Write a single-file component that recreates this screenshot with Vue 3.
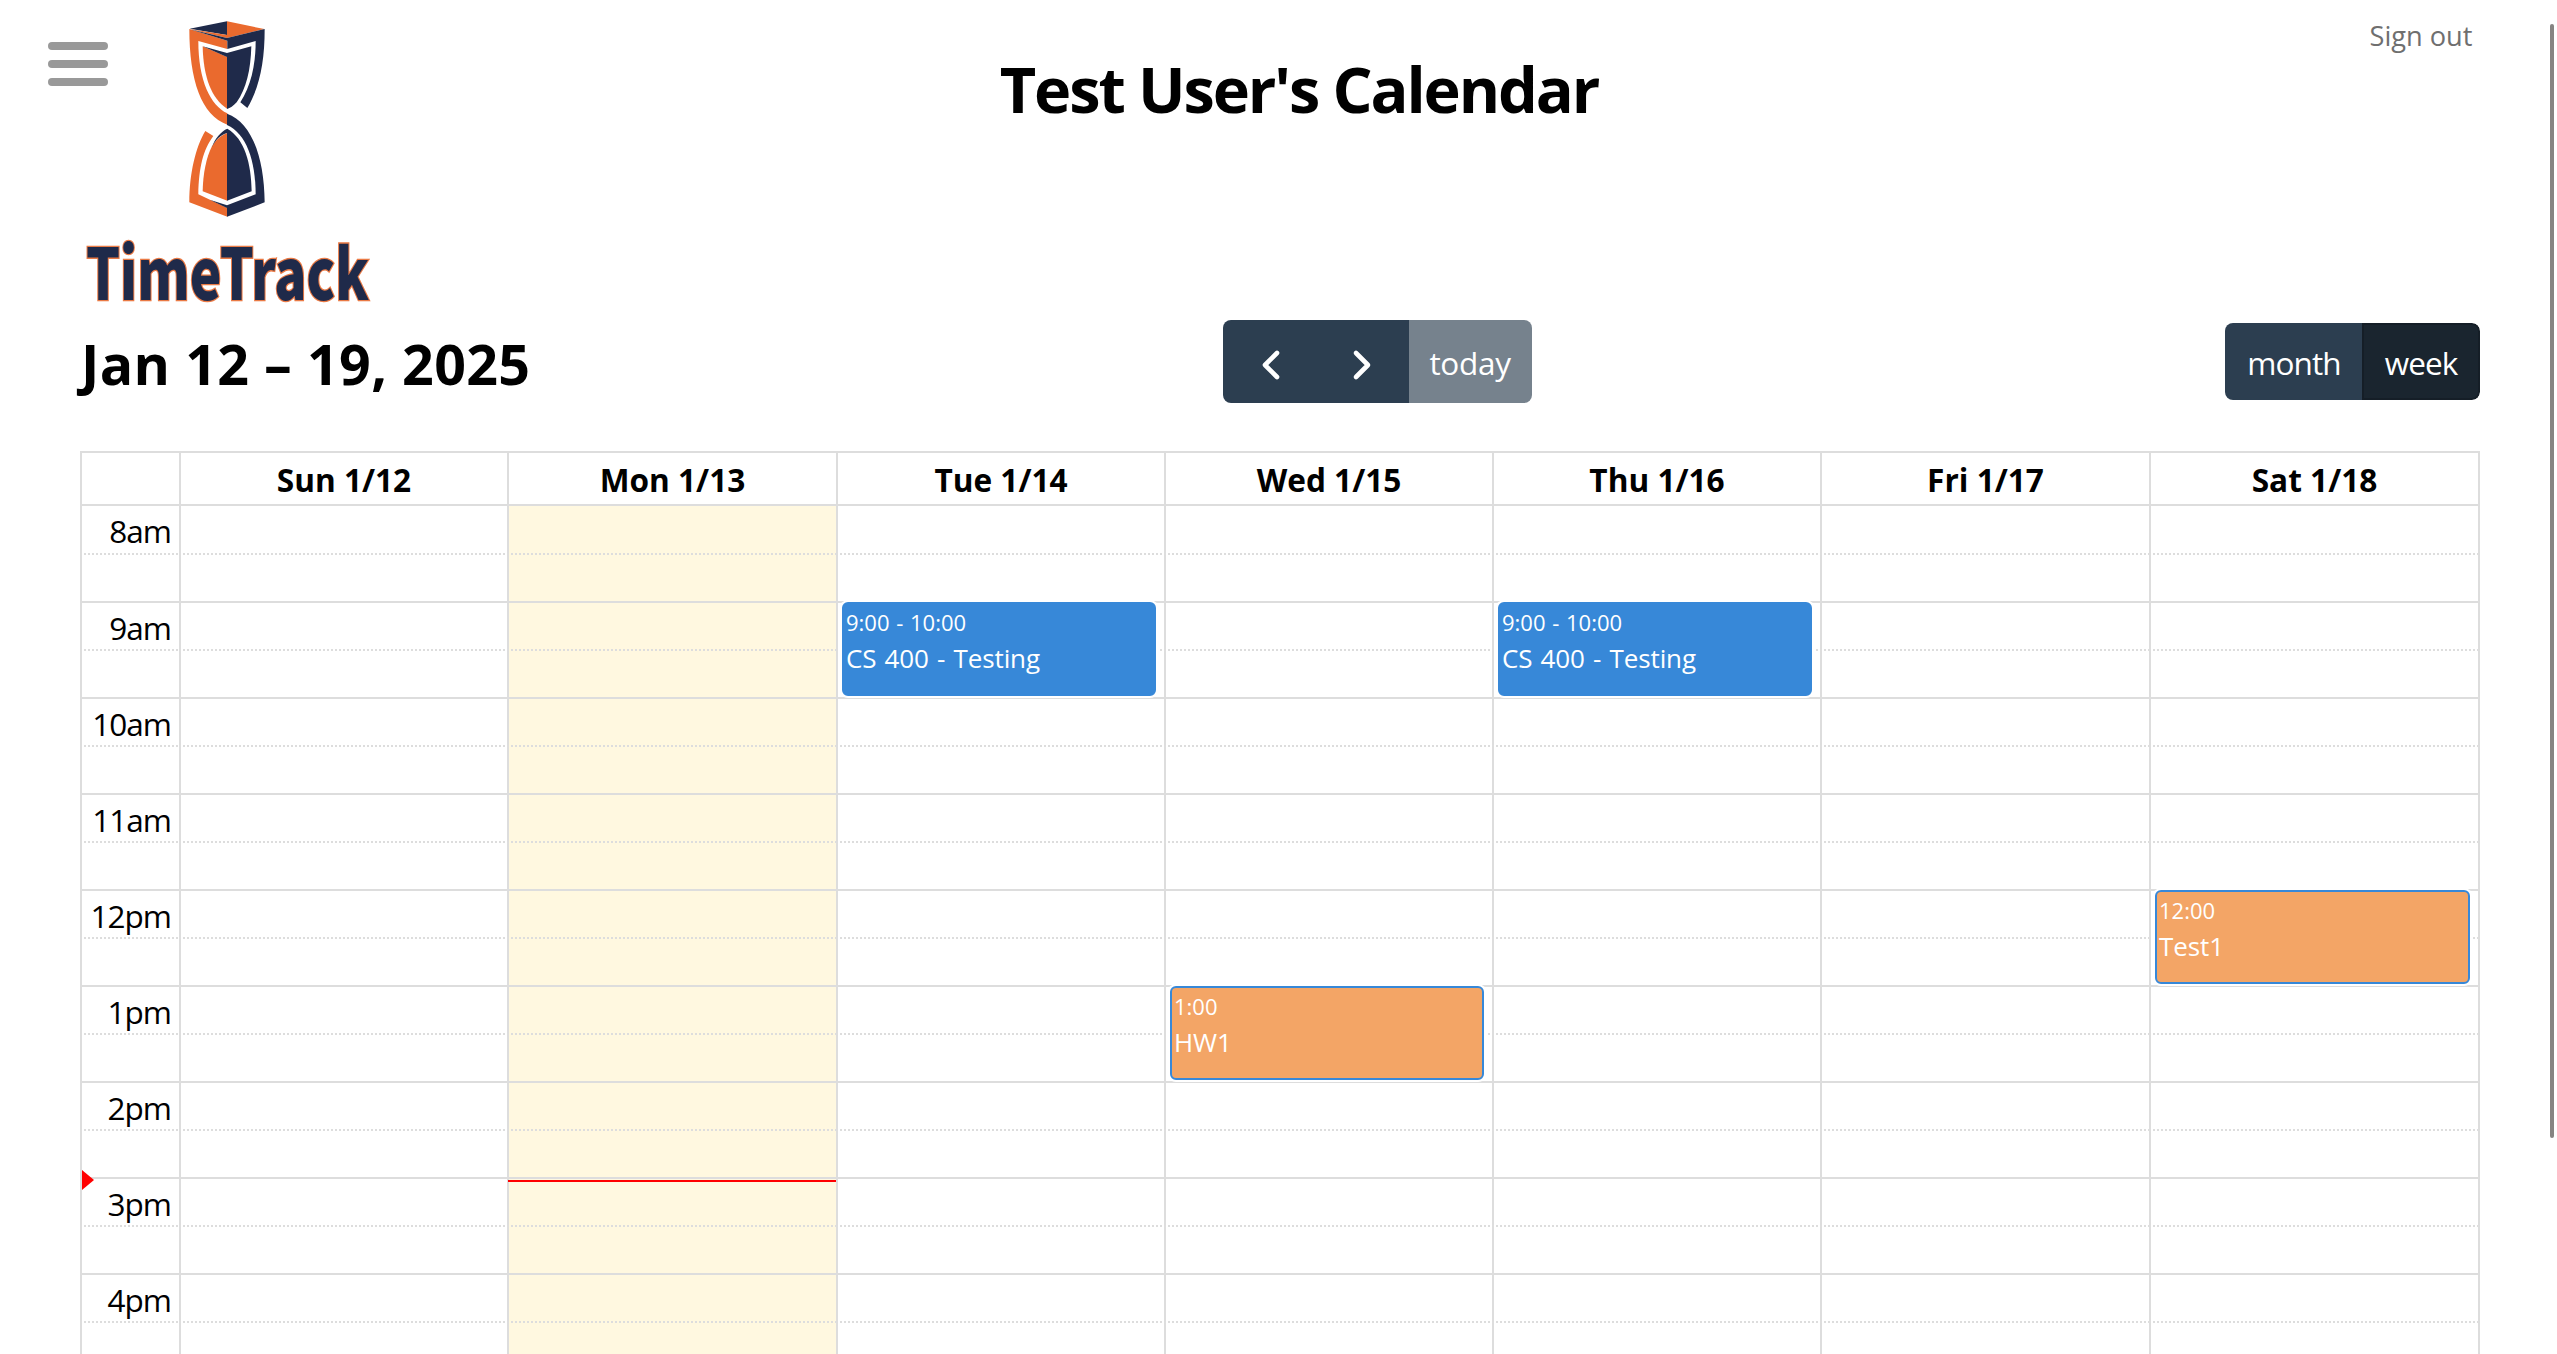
<script setup>
const days = [
  { label: 'Sun 1/12', events: [] },
  { label: 'Mon 1/13', today: true, events: [] },
  { label: 'Tue 1/14', events: [{ time: '9:00 - 10:00', title: 'CS 400 - Testing', hour: 1 }] },
  { label: 'Wed 1/15', events: [{ time: '1:00', title: 'HW1', hour: 5, task: true }] },
  { label: 'Thu 1/16', events: [{ time: '9:00 - 10:00', title: 'CS 400 - Testing', hour: 1 }] },
  { label: 'Fri 1/17', events: [] },
  { label: 'Sat 1/18', events: [{ time: '12:00', title: 'Test1', hour: 4, task: true }] },
]
const hours = ['8am', '9am', '10am', '11am', '12pm', '1pm', '2pm', '3pm', '4pm']
</script>

<template>
  <div class="page">
    <header class="top">
      <div class="brand-side">
        <button class="burger" aria-label="Menu"><i></i><i></i><i></i></button>
        <div class="brand">
          <svg class="mark" viewBox="568 62 228 588" width="76" height="196">
            <path fill="#1f2a4a" d="M570 85 682 63V104Z" />
            <path fill="#ea6a2e" d="M682 63 794 86 682 113 570 86 682 104Z" />
            <path fill="#ea6a2e" d="M569 86 683 121V146L596 122C596 240 632 315 683 339V373C605 345 569 240 569 86Z" />
            <path fill="#1f2a4a" d="M571 87 682 113 795 86C795 185 780 260 743 323L722 306C752 258 768 200 768 122L683 146V121Z" />
            <path fill="#ea6a2e" d="M609 138 683 170V326C635 295 611 230 609 138Z" />
            <path fill="#1f2a4a" d="M609 138 682 158 755 138C753 210 740 265 711 306 700 318 692 323 682 326V170Z" />
            <path fill="#ea6a2e" d="M617 392 641 407C610 450 598 500 596 582L683 623V649L569 606C569 520 588 440 617 392Z" />
            <path fill="#1f2a4a" d="M682 340C755 365 794 470 795 606L682 649V623L630 598 682 615 768 582C768 480 740 400 682 374Z" />
            <path fill="#ea6a2e" d="M609 573C610 520 620 470 637 438 650 415 668 403 683 398V601Z" />
            <path fill="#1f2a4a" d="M637 440C645 415 665 392 683 385 735 415 755 490 756 573L682 601V398C665 403 650 415 637 440Z" />
          </svg>
          <svg class="wordmark" viewBox="0 0 290 70" width="290" height="70">
            <text x="3" y="59" textLength="283" lengthAdjust="spacingAndGlyphs">TimeTrack</text>
          </svg>
        </div>
      </div>
      <h1>Test User's Calendar</h1>
      <a class="signout">Sign out</a>
    </header>

    <div class="toolbar">
      <h2>Jan 12 – 19, 2025</h2>
      <div class="group nav">
        <button class="arrow prev" aria-label="Previous"><svg width="22" height="32" viewBox="0 0 22 32"><path d="M17 4 5 16 17 28" /></svg></button>
        <button class="arrow next" aria-label="Next"><svg width="22" height="32" viewBox="0 0 22 32"><path d="M5 4 17 16 5 28" /></svg></button>
        <button class="today-btn">today</button>
      </div>
      <div class="group views">
        <button class="month">month</button>
        <button class="week">week</button>
      </div>
    </div>

    <main class="calendar">
      <div class="axis">
        <div class="head"></div>
        <div v-for="h in hours" :key="h" class="hour">
          <div class="slot">{{ h }}</div>
          <div class="slot minor"></div>
        </div>
        <div class="now-arrow"></div>
      </div>
      <div v-for="d in days" :key="d.label" class="day" :class="{ today: d.today }">
        <div class="head">{{ d.label }}</div>
        <div v-for="h in hours" :key="h" class="hour">
          <div class="slot"></div>
          <div class="slot minor"></div>
        </div>
        <div v-if="d.today" class="now-line"></div>
        <div v-for="e in d.events" :key="e.title" class="event" :class="{ task: e.task }" :style="{ top: 53 + e.hour * 96 + 'px' }">
          <div class="time">{{ e.time }}</div>
          <div class="title">{{ e.title }}</div>
        </div>
      </div>
    </main>
    <div class="scroll-thumb"></div>
  </div>
</template>

<style>
body { margin: 0; background: #fff; overflow: hidden; }
</style>

<style scoped>
.page { position: relative; width: 2557px; height: 1354px; overflow: hidden; font-family: "Open Sans", "Noto Sans", sans-serif; color: #000; background: #fff; }
h1, h2 { margin: 0; font-weight: 700; white-space: nowrap; }
button { border: 0; padding: 0; margin: 0; background: none; color: inherit; font: inherit; letter-spacing: inherit; }
svg { display: block; }

.top { display: grid; grid-template-columns: 400px 1fr 400px; height: 320px; }
.brand-side { display: flex; }
.burger { display: flex; flex-direction: column; gap: 10px; width: 60px; height: 44px; margin: 42px -25px 0 48px; }
.burger i { height: 8px; border-radius: 4px; background: #999; }
.brand { display: flex; flex-direction: column; align-items: center; width: 290px; padding-top: 20.5px; }
.mark { margin-left: -2px; }
.wordmark { margin-top: 24px; overflow: visible; }
.wordmark text { font: 900 71px "Noto Sans CJK JP", sans-serif; fill: #1f2a4a; stroke: #ea7a45; stroke-width: 2.6px; paint-order: stroke; }
h1 { padding: 49px 0 0 41px; text-align: center; font-size: 63px; line-height: 80px; letter-spacing: -2.1px; }
.signout { padding: 17px 84.5px 0 0; text-align: right; font-size: 27.2px; line-height: 38px; color: #6f6f6f; }

.toolbar { display: flex; justify-content: space-between; align-items: center; height: 83px; margin: 0 77px 0 80px; }
h2 { width: 448px; padding: 5px 0 0 1px; font-size: 55.5px; line-height: 76px; letter-spacing: 0.35px; }
.group { display: flex; font-size: 31.5px; line-height: 42px; color: #fff; border-radius: 8px; overflow: hidden; }
.group button { display: flex; align-items: center; justify-content: center; box-sizing: border-box; background: #2c3e50; padding-top: 2px; }
.nav { height: 83px; }
.arrow { width: 93px; }
.group .arrow { padding-top: 7px; }
.group .prev { padding-left: 3px; }
.arrow path { fill: none; stroke: #fff; stroke-width: 4.6; stroke-linecap: round; stroke-linejoin: round; }
.nav .today-btn { width: 123px; background: #76828d; letter-spacing: -0.3px; }
.views { height: 77px; letter-spacing: -0.9px; }
.group .month { width: 137px; padding-left: 1px; }
.views .week { width: 118px; padding-top: 2px; background: #1a252f; border: 2px solid #151e27; border-radius: 0 8px 8px 0; }

.calendar { display: grid; grid-template-columns: 99px 328px 329px 328px 328px 328px 329px 329px; width: 2398px; height: 901px; margin: 48px 0 0 80px; border-top: 2px solid #ddd; border-right: 2px solid #ddd; }
.axis, .day { position: relative; border-left: 2px solid #ddd; }
.head { height: 51px; text-align: center; font-size: 31.6px; font-weight: 700; line-height: 54px; }
.slot { box-sizing: border-box; height: 48px; border-top: 2px solid #ddd; }
.head + .hour .slot:first-child { height: 49px; }
.slot.minor { border-top: 0; background: repeating-linear-gradient(90deg, transparent 0 2px, #ddd 2px 4px) 0 0 / 100% 2px no-repeat; }
.axis .slot { padding-right: 8px; text-align: right; font-size: 31.5px; line-height: 50px; letter-spacing: -1px; }
.today .hour { background: #fff8e0; }
.now-arrow { position: absolute; left: 0; top: 717px; border: 10px solid transparent; border-left: 12px solid #f00; border-right: 0; }
.now-line { position: absolute; left: -1px; right: 0; top: 727px; height: 2px; background: #f00; }
.event { position: absolute; left: 4px; right: 8px; height: 94px; box-sizing: border-box; border: 2px solid #3788d8; border-radius: 6px; background: #3788d8; box-shadow: 0 0 0 2px #fff; color: #fff; padding: 2px; white-space: nowrap; }
.event.task { background: #f3a566; }
.time { font-size: 22px; line-height: 33px; word-spacing: 1px; }
.title { font-size: 26px; line-height: 39px; word-spacing: 1.5px; letter-spacing: -0.1px; }
.scroll-thumb { position: absolute; left: 2550px; top: 24px; width: 4px; height: 1114px; border-radius: 2px; background: #868482; }
</style>
